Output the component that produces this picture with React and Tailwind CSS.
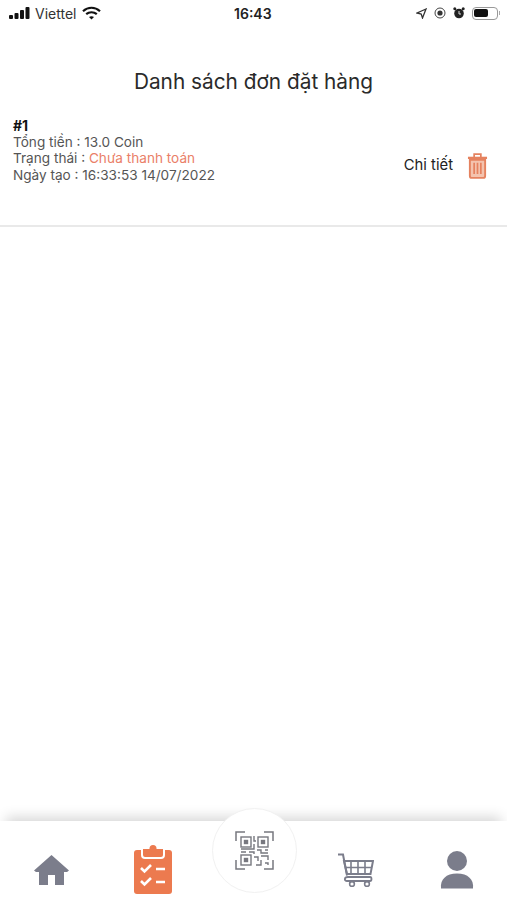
const font = { fontFamily: "Inter, 'Noto Sans', sans-serif" };

const StatusBar = () => (
  <div className="h-[26px] flex items-center justify-between pl-[9px] pr-[7px] text-[14px] text-[#222] relative">
    <div className="flex items-center">
      <svg width="21" height="12" viewBox="0 0 21 12" fill="#111">
        <rect x="0" y="8" width="4" height="4" rx="1" />
        <rect x="5.5" y="6" width="4" height="6" rx="1" />
        <rect x="11" y="3" width="4" height="9" rx="1" />
        <rect x="16.5" y="0" width="4" height="12" rx="1" />
      </svg>
      <span className="ml-[5px] text-[#333]">Viettel</span>
      <svg className="ml-[6px]" width="19" height="14" viewBox="0 0 19 14" fill="none" stroke="#111" strokeWidth="2.2">
        <path d="M1 5.2C6 .6 13 .6 18 5.2" />
        <path d="M4.2 8.2c3-2.600 7.600-2.600 10.600 0" />
        <path d="M9.500 13.500 7 11c1.400-1.100 3.600-1.100 5 0z" fill="#111" stroke="none" />
      </svg>
    </div>
    <span className="absolute left-[234px] top-[3px] font-semibold text-[#222]">16:43</span>
    <div className="flex items-center gap-[7px]">
      <svg width="11" height="11" viewBox="0 0 11 11" fill="none" stroke="#333" strokeWidth="1.3">
        <path d="M10 1 1 5l4.200 1L6.500 10z" />
      </svg>
      <svg width="12" height="12" viewBox="0 0 12 12" fill="none">
        <circle cx="6" cy="6" r="5" stroke="#444" />
        <circle cx="6" cy="6" r="2.600" fill="#333" />
      </svg>
      <svg width="12" height="12" viewBox="0 0 12 12" fill="#222">
        <circle cx="6" cy="6.500" r="4.800" />
        <circle cx="1.800" cy="1.800" r="1.500" />
        <circle cx="10.200" cy="1.800" r="1.500" />
        <path d="M6 4v3h2" stroke="#ddd" fill="none" />
      </svg>
      <div className="flex items-center">
        <div className="w-[26px] h-[13px] rounded-[4px] border border-[#999] p-[1.5px]">
          <div className="w-[14px] h-full rounded-[2px] bg-[#111]" />
        </div>
        <div className="w-[1.5px] h-[4px] ml-[1px] bg-[#aaa]" />
      </div>
    </div>
  </div>
);

const OrderRow = () => (
  <div className="h-[118px] mt-[11px] pt-[9px] flex border-b-2 border-[#e9e9e9] pl-[13px] pr-[19px]">
    <div className="flex-1 text-[13.6px] leading-[16.2px] text-[#555]">
      <div className="font-bold text-[#111] text-[14px]">#1</div>
      <div>Tổng tiền : 13.0 Coin</div>
      <div>
        Trạng thái : <span className="text-[#ea8068]">Chưa thanh toán</span>
      </div>
      <div>Ngày tạo : 16:33:53 14/07/2022</div>
    </div>
    <div className="flex items-center h-[95px]">
      <span className="text-[14.800px] text-[#222] mr-[14px]">Chi tiết</span>
      <svg width="21" height="27" viewBox="0 0 22 28" fill="none" stroke="#e5825f">
        <path d="M1 6h20" strokeWidth="2.400" />
        <path d="M7.500 5V2h7v3" strokeWidth="1.800" />
        <path d="M3 8v17c0 1.400.8 2 2 2h12c1.200 0 2-.6 2-2V8z" fill="#f4c3ae" strokeWidth="2" />
        <path d="M7.500 11v12M11 11v12M14.500 11v12" strokeWidth="1.800" />
      </svg>
    </div>
  </div>
);

const TabBar = () => (
  <div className="relative h-[79px] bg-white shadow-[0_-10px_12px_-6px_rgba(0,0,0,0.16)]">
    <div className="h-full flex items-start pt-[8px] pl-[34px]">
      <svg className="mt-[26px]" width="35" height="30" viewBox="0 0 35 30" fill="#7b7d8b">
        <path d="M17.500 0 35 15.500 33 17H30V30H21V20H14V30H5V17H2L0 15.500Z" />
      </svg>
      <svg className="ml-[65px] mt-[16px]" width="38" height="50" viewBox="0 0 38 50">
        <rect x="0" y="5" width="38" height="44" rx="3" fill="#ec7a4f" />
        <path d="M8 3h22v7c0 2-1 3-3 3H11c-2 0-3-1-3-3z" fill="#ec7a4f" stroke="#fff" strokeWidth="2" />
        <circle cx="19" cy="3.500" r="3.500" fill="#ec7a4f" />
        <path d="M7 23l3.500 3.500L17 20M7 36l3.500 3.500L17 33" fill="none" stroke="#fff" strokeWidth="2.600" />
        <path d="M22 24h9M22 37h9" stroke="#fff" strokeWidth="2.600" />
      </svg>
      <svg className="ml-[165px] mt-[24px]" width="37" height="34" viewBox="0 0 37 34" fill="none" stroke="#7b7d8b">
        <path d="M1 1.500h5l4 21" strokeWidth="2" />
        <path d="M7 8h29l-2.500 13H10z" strokeWidth="2" />
        <path d="M14 8v13M21 8v13M28 8v13M8 14.500h27" strokeWidth="1.600" />
        <path d="M11 24h22c2 0 2 4 0 4H10c-3 0-3-4 1-4z" strokeWidth="1.800" />
        <circle cx="15" cy="31" r="2.400" strokeWidth="1.600" />
        <circle cx="30" cy="31" r="2.400" strokeWidth="1.600" />
      </svg>
      <svg className="ml-[66px] mt-[22px]" width="34" height="38" viewBox="0 0 34 38" fill="#7b7d8b">
        <circle cx="17" cy="10" r="10" />
        <path d="M1 37.500c-1-9 5-15 16-15s17 6 16 15z" />
      </svg>
    </div>
    <div className="absolute left-[212px] -top-[13px] w-[85px] h-[85px] rounded-full bg-white border border-[#f1f1f1] flex items-center justify-center">
      <svg width="39" height="39" viewBox="0 0 39 39" fill="none" stroke="#77787f" strokeWidth="1.400">
        <path d="M1 10V1h9M29 1h9v9M1 29v9h9M38 29v9h-9" strokeWidth="1.500" />
        <rect x="6" y="6" width="10" height="10" />
        <rect x="9.500" y="9.500" width="3" height="3" fill="#77787f" />
        <rect x="23" y="6" width="10" height="10" />
        <rect x="26.500" y="9.500" width="3" height="3" fill="#77787f" />
        <rect x="6" y="24" width="10" height="10" />
        <rect x="9.500" y="27.500" width="3" height="3" fill="#77787f" />
        <path d="M19 5v5h2M19 13v5h-13M6 21h5M14 21h5v2M22 19h4v3h7M30 19h3M19 26h4v4M26 25h7v4M26 29v5h-5M30 32h3v2" />
      </svg>
    </div>
  </div>
);

export default function App() {
  return (
    <div className="h-[900px] w-full bg-white flex flex-col overflow-hidden" style={font}>
      <StatusBar />
      <h1 className="mt-[40px] text-center text-[20.800px] leading-[32px] text-[#2a2a2a]">Danh sách đơn đặt hàng</h1>
      <OrderRow />
      <div className="flex-1" />
      <TabBar />
    </div>
  );
}
